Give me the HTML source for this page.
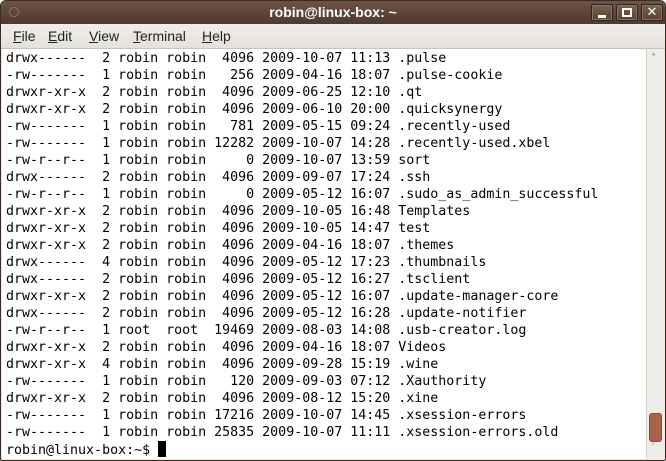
<!DOCTYPE html>
<html><head><meta charset="utf-8"><style>
*{margin:0;padding:0;box-sizing:border-box}
html,body{width:666px;height:461px;overflow:hidden;background:#fff}
.win{position:absolute;left:0;top:0;width:666px;height:461px;border:1px solid #3a2c22;border-radius:6px 6px 2px 2px;background:#ece9e4;overflow:hidden}
.title{position:absolute;left:0;top:0;width:664px;height:23px;background:linear-gradient(#6e5444,#4f3a2e);color:#fff;font:bold 14px "Liberation Sans",sans-serif;text-align:center;line-height:23px}
.circ{position:absolute;left:8px;top:6px;width:10px;height:10px;border:1px solid #8a7566;border-radius:50%}
.btn{position:absolute;top:3px;width:22px;height:17px;border:1px solid #2e221a;border-radius:2px;background:linear-gradient(#7a6253,#56402f);box-shadow:inset 0 0 0 1px #8c7566}
.menu{position:absolute;left:0;top:23px;width:664px;height:25px;background:linear-gradient(#f0eeea,#e4e1dc);border-bottom:1px solid #c8c4bc;font:14px "Liberation Sans","DejaVu Sans",sans-serif;color:#222;line-height:25px}
.menu span{position:absolute}
.menu u{text-decoration:underline}
.term{position:absolute;left:1px;top:48px;width:644px;height:410px;background:#fff}
pre{position:absolute;left:4px;top:1px;font:13.3px/17px "DejaVu Sans Mono",monospace;color:#000}
.sb{position:absolute;left:645px;top:48px;width:18px;height:410px;background:#efedea;border-left:1px solid #d4d0c8}
.thumb{position:absolute;left:2px;top:364px;width:13px;height:29px;background:#a8634a;border:1px solid #8a4c36;border-radius:3px}
.cur{display:inline-block;width:8px;height:16px;background:#000;vertical-align:-3px}
</style></head><body>
<div class="win">
<div class="title"><div class="circ"></div>robin@linux-box: ~
<div class="btn" style="left:590px"><div style="position:absolute;left:6px;top:10px;width:8px;height:3px;background:#fff"></div></div>
<div class="btn" style="left:615px"><div style="position:absolute;left:5px;top:3px;width:10px;height:9px;border:2px solid #fff"></div></div>
<div class="btn" style="left:640px;color:#fff;font:bold 13px 'DejaVu Sans',sans-serif;line-height:15px;text-align:center">✕</div>
</div>
<div class="menu"><span style="left:12px"><u>F</u>ile</span><span style="left:47px"><u>E</u>dit</span><span style="left:88px"><u>V</u>iew</span><span style="left:132px"><u>T</u>erminal</span><span style="left:201px"><u>H</u>elp</span></div>
<div class="term"><pre>drwx------  2 robin robin  4096 2009-10-07 11:13 .pulse
-rw-------  1 robin robin   256 2009-04-16 18:07 .pulse-cookie
drwxr-xr-x  2 robin robin  4096 2009-06-25 12:10 .qt
drwxr-xr-x  2 robin robin  4096 2009-06-10 20:00 .quicksynergy
-rw-------  1 robin robin   781 2009-05-15 09:24 .recently-used
-rw-------  1 robin robin 12282 2009-10-07 14:28 .recently-used.xbel
-rw-r--r--  1 robin robin     0 2009-10-07 13:59 sort
drwx------  2 robin robin  4096 2009-09-07 17:24 .ssh
-rw-r--r--  1 robin robin     0 2009-05-12 16:07 .sudo_as_admin_successful
drwxr-xr-x  2 robin robin  4096 2009-10-05 16:48 Templates
drwxr-xr-x  2 robin robin  4096 2009-10-05 14:47 test
drwxr-xr-x  2 robin robin  4096 2009-04-16 18:07 .themes
drwx------  4 robin robin  4096 2009-05-12 17:23 .thumbnails
drwx------  2 robin robin  4096 2009-05-12 16:27 .tsclient
drwxr-xr-x  2 robin robin  4096 2009-05-12 16:07 .update-manager-core
drwx------  2 robin robin  4096 2009-05-12 16:28 .update-notifier
-rw-r--r--  1 root  root  19469 2009-08-03 14:08 .usb-creator.log
drwxr-xr-x  2 robin robin  4096 2009-04-16 18:07 Videos
drwxr-xr-x  4 robin robin  4096 2009-09-28 15:19 .wine
-rw-------  1 robin robin   120 2009-09-03 07:12 .Xauthority
drwxr-xr-x  2 robin robin  4096 2009-08-12 15:20 .xine
-rw-------  1 robin robin 17216 2009-10-07 14:45 .xsession-errors
-rw-------  1 robin robin 25835 2009-10-07 11:11 .xsession-errors.old
robin@linux-box:~$ <span class="cur"></span></pre></div>
<div class="sb"><div style="position:absolute;left:4px;top:4px;font:10px 'DejaVu Sans',sans-serif;color:#666">˄</div><div class="thumb"></div><div style="position:absolute;left:4px;top:394px;font:9px 'DejaVu Sans',sans-serif;color:#999">˅</div></div>
</div>
</body></html>
